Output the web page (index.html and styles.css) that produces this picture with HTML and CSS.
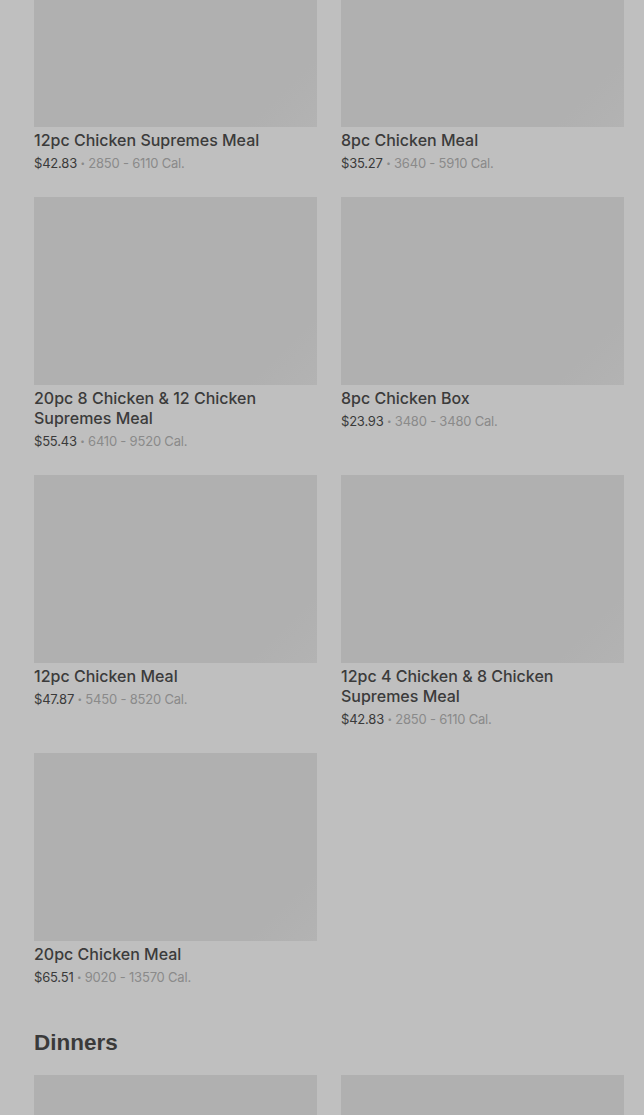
FILE: index.html
```html
<!DOCTYPE html>
<html lang="en">
<head>
  <meta charset="UTF-8">
  <meta name="viewport" content="width=device-width, initial-scale=1.0">
  <title>Menu</title>
  <link rel="stylesheet" href="styles.css">
</head>
<body>
  <!-- Meals section (scrolled) -->
  <section class="menu-section scrolled">
    <div class="item-grid">
      <div class="item">
        <div class="item-img"></div>
        <div class="item-title">12pc Chicken Supremes Meal</div>
        <div class="item-meta"><span class="price">$42.83</span> <span class="dot">•</span> 2850 - 6110 Cal.</div>
      </div>
      <div class="item">
        <div class="item-img"></div>
        <div class="item-title">8pc Chicken Meal</div>
        <div class="item-meta"><span class="price">$35.27</span> <span class="dot">•</span> 3640 - 5910 Cal.</div>
      </div>
      <div class="item">
        <div class="item-img"></div>
        <div class="item-title">20pc 8 Chicken &amp; 12 Chicken Supremes Meal</div>
        <div class="item-meta"><span class="price">$55.43</span> <span class="dot">•</span> 6410 - 9520 Cal.</div>
      </div>
      <div class="item">
        <div class="item-img"></div>
        <div class="item-title">8pc Chicken Box</div>
        <div class="item-meta"><span class="price">$23.93</span> <span class="dot">•</span> 3480 - 3480 Cal.</div>
      </div>
      <div class="item">
        <div class="item-img"></div>
        <div class="item-title">12pc Chicken Meal</div>
        <div class="item-meta"><span class="price">$47.87</span> <span class="dot">•</span> 5450 - 8520 Cal.</div>
      </div>
      <div class="item">
        <div class="item-img"></div>
        <div class="item-title">12pc 4 Chicken &amp; 8 Chicken Supremes Meal</div>
        <div class="item-meta"><span class="price">$42.83</span> <span class="dot">•</span> 2850 - 6110 Cal.</div>
      </div>
      <div class="item">
        <div class="item-img"></div>
        <div class="item-title">20pc Chicken Meal</div>
        <div class="item-meta"><span class="price">$65.51</span> <span class="dot">•</span> 9020 - 13570 Cal.</div>
      </div>
    </div>
  </section>

  <!-- Dinners -->
  <section class="menu-section">
    <h2 class="section-title">Dinners</h2>
    <div class="item-grid">
      <div class="item">
        <div class="item-img"></div>
      </div>
      <div class="item">
        <div class="item-img"></div>
      </div>
    </div>
  </section>
</body>
</html>
```

FILE: styles.css
```css
/* General Styles */
body {
  font-family: 'Inter', 'Roboto', sans-serif;
  margin: 0;
  padding: 0 20px 0 34px;
  background-color: #bfbfbf;
  color: #3a3a3a;
}

.menu-section.scrolled {
  margin-top: -61px;
}

.section-title {
  font-family: 'Liberation Sans', sans-serif;
  font-size: 22.5px;
  font-weight: 700;
  color: #3a3a3a;
  margin: 39px 0 14px;
  line-height: 36px;
}

/* Item Grid */
.item-grid {
  display: grid;
  grid-template-columns: 1fr 1fr;
  column-gap: 24px;
  row-gap: 25px;
}

.item-img {
  height: 188px;
  background-color: #b0b0b0;
  background-image: linear-gradient(135deg, #b0b0b0 85%, #b3b3b3 100%);
}

.item-title {
  margin-top: 3px;
  font-size: 16px;
  font-weight: 500;
  line-height: 20px;
  color: #3b3b3b;
  padding-right: 50px;
}

.item-meta {
  margin-top: 4px;
  font-size: 13px;
  line-height: 18px;
  color: #8a8a8a;
  letter-spacing: -0.2px;
}

.item-meta .price {
  color: #3a3a3a;
}

.item-meta .dot {
  font-size: 8px;
  vertical-align: 2px;
}
```
